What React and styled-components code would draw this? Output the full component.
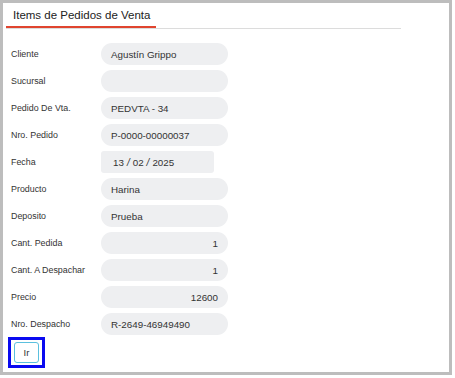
import React from "react";
import styled, { createGlobalStyle } from "styled-components";

const GlobalStyle = createGlobalStyle`
  html, body { margin: 0; padding: 0; background: #fff; }
  body { font-family: "Liberation Sans", Arial, sans-serif; }
`;

const Frame = styled.div`
  width: 452px;
  height: 375px;
  box-sizing: border-box;
  border: 3px solid #bdbdbd;
  display: flex;
  flex-direction: column;
`;

const Header = styled.div`
  margin-left: 3px;
  width: 395px;
  border-bottom: 1px solid #dcdcdc;
`;

const Title = styled.div`
  display: inline-block;
  padding: 5px 6px 3px 7px;
  line-height: 15px;
  font-size: 11.5px;
  color: #222;
  border-bottom: 2px solid #e0442f;
`;

const Form = styled.div`
  margin-top: 14px;
  padding-left: 8px;
  display: flex;
  flex-direction: column;
  gap: 5px;
`;

const Row = styled.div`
  display: flex;
  align-items: center;
  height: 22px;
`;

const Label = styled.div`
  width: 90px;
  font-size: 8.9px;
  color: #333;
`;

const Field = styled.div`
  box-sizing: border-box;
  width: ${(p) => (p.$date ? "113px" : "127px")};
  height: 22px;
  border-radius: ${(p) => (p.$date ? "3px" : "11px")};
  background: #eeeff1;
  padding: ${(p) => (p.$date ? "0 12px" : "0 10px")};
  display: flex;
  align-items: center;
  justify-content: ${(p) => (p.$right ? "flex-end" : "flex-start")};
  font-size: 9.8px;
  color: #333;
`;

const Sep = styled.span`
  margin: 0 3px;
  font-size: 10px;
  font-style: italic;
`;

const ButtonWrap = styled.div`
  margin-top: 2px;
  padding-left: 5px;
`;

const FocusRing = styled.span`
  display: inline-flex;
  border: 3px solid #0a0af0;
  padding: 2px 3px;
`;

const Button = styled.button`
  width: 25px;
  height: 21px;
  padding: 0;
  box-sizing: border-box;
  background: #fff;
  border: 1px solid #5bc0de;
  border-radius: 3px;
  font-family: "Liberation Sans", Arial, sans-serif;
  font-size: 9.5px;
  color: #333;
  outline: none;
`;

const rows = [
  { label: "Cliente", value: "Agustín Grippo" },
  { label: "Sucursal", value: "" },
  { label: "Pedido De Vta.", value: "PEDVTA - 34" },
  { label: "Nro. Pedido", value: "P-0000-00000037" },
  { label: "Fecha", date: true },
  { label: "Producto", value: "Harina" },
  { label: "Deposito", value: "Prueba" },
  { label: "Cant. Pedida", value: "1", right: true },
  { label: "Cant. A Despachar", value: "1", right: true },
  { label: "Precio", value: "12600", right: true },
  { label: "Nro. Despacho", value: "R-2649-46949490" },
];

export default function App() {
  return (
    <>
      <GlobalStyle />
      <Frame>
        <Header>
          <Title>Items de Pedidos de Venta</Title>
        </Header>
        <Form>
          {rows.map((r) => (
            <Row key={r.label}>
              <Label>{r.label}</Label>
              {r.date ? (
                <Field $date>
                  13<Sep>/</Sep>02<Sep>/</Sep>2025
                </Field>
              ) : (
                <Field $right={r.right}>{r.value}</Field>
              )}
            </Row>
          ))}
        </Form>
        <ButtonWrap>
          <FocusRing>
            <Button>Ir</Button>
          </FocusRing>
        </ButtonWrap>
      </Frame>
    </>
  );
}
